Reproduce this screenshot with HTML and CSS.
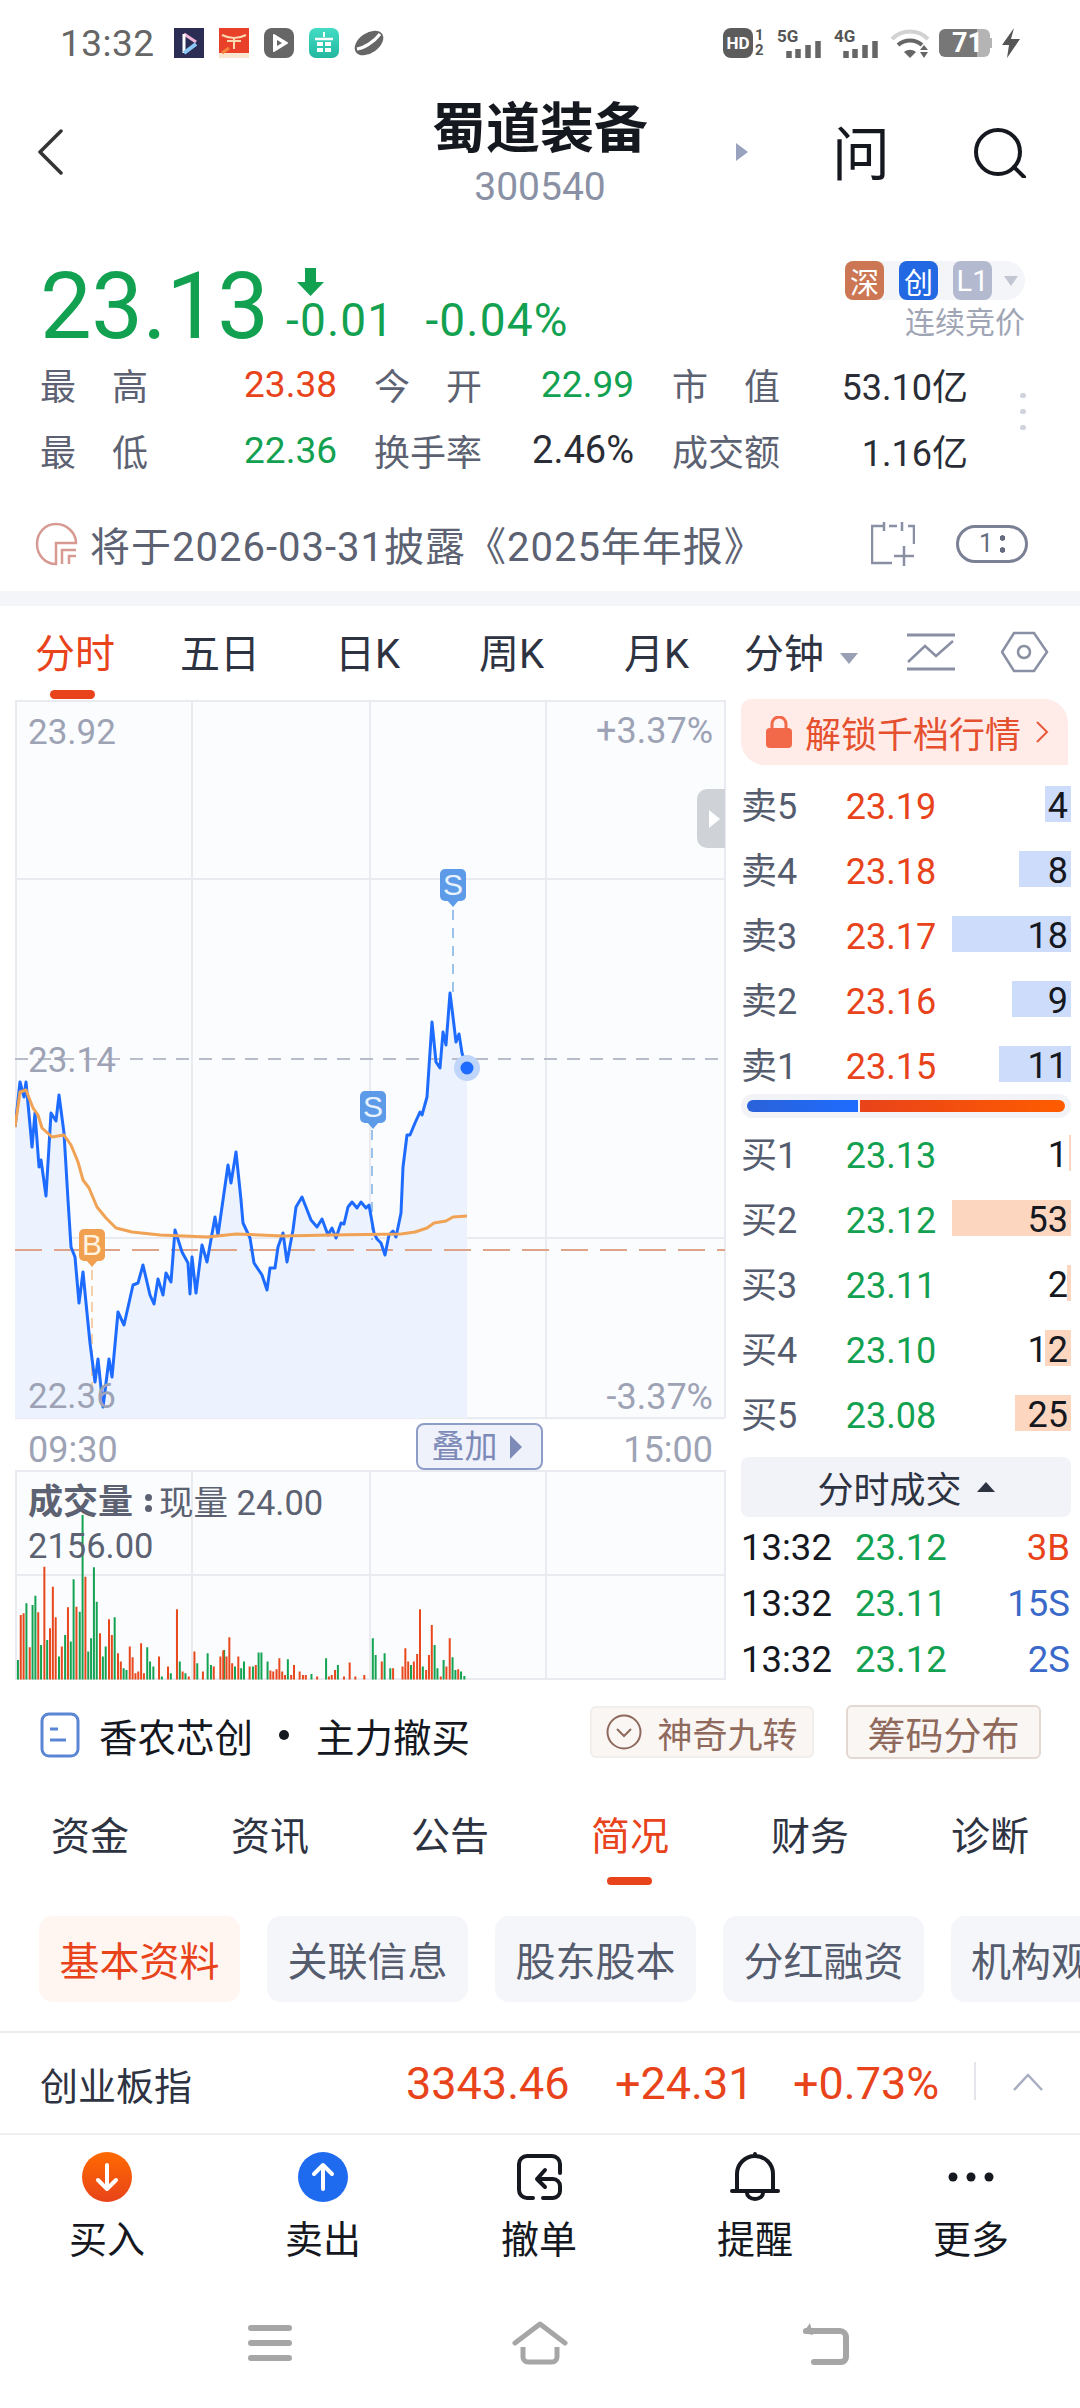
FILE: index.html
```html
<!DOCTYPE html>
<html lang="zh">
<head>
<meta charset="utf-8">
<title>蜀道装备</title>
<link rel="stylesheet" href="styles.css">
</head>
<body>
<div class="page">
  <header class="status">
    <span class="clock">13:32</span>
    <div class="apps">
      <svg width="30" height="30" viewBox="0 0 30 30"><rect width="30" height="30" fill="#2c2d55"/><path d="M10 6l12 8" stroke="#f0b6d8" stroke-width="3"/><path d="M10 6v19" stroke="#fff" stroke-width="3"/><path d="M10 25l12-9" stroke="#8cc8f5" stroke-width="4"/></svg>
      <svg width="30" height="30" viewBox="0 0 30 30"><rect width="30" height="30" fill="#e9402a"/><rect y="25" width="30" height="5" fill="#f9e6d0"/><path d="M3 7c6 3 9 3 12 3s6 0 12-3M8 13h14M15 10v11" stroke="#fbd9b0" stroke-width="2" fill="none"/><path d="M3 25l7-5" stroke="#f2843c" stroke-width="3"/></svg>
      <svg width="30" height="30" viewBox="0 0 30 30"><rect width="30" height="30" rx="8" fill="#666"/><path d="M10 7l13 8-13 8z" fill="#fff" stroke="#fff" stroke-width="2" stroke-linejoin="round"/><path d="M13 12l5 3-5 3z" fill="#666"/></svg>
      <svg width="30" height="30" viewBox="0 0 30 30"><defs><linearGradient id="tl" x1="0" y1="0" x2="0" y2="1"><stop offset="0" stop-color="#44dcc4"/><stop offset="1" stop-color="#22b8a0"/></linearGradient></defs><rect width="30" height="30" rx="7" fill="url(#tl)"/><path d="M6 11h18" stroke="#fff" stroke-width="2.500"/><path d="M8 14h14v10H8z" fill="#fff"/><path d="M15 14v10M8 19h14" stroke="#2fc8af" stroke-width="2"/><path d="M15 4v5" stroke="#fff" stroke-width="2"/></svg>
      <svg width="30" height="30" viewBox="0 0 30 30"><ellipse cx="15" cy="15" rx="16" ry="10" transform="rotate(-35 15 15)" fill="#666"/><path d="M3 21C10 20 20 14 26 6" stroke="#fff" stroke-width="3" fill="none"/></svg>
    </div>
    <div class="sys">
      <span class="hd">HD</span>
      <span class="sims"><i>1</i><i>2</i></span>
      <span class="net net1"><b>5G</b><svg width="36" height="17" viewBox="0 0 36 17"><path d="M3 17v-7M12 17v-9M22 17v-13M32 17v-17" stroke="#666" stroke-width="5.500"/></svg></span>
      <span class="net"><b>4G</b><svg width="36" height="17" viewBox="0 0 36 17"><path d="M3 17v-7M12 17v-9M22 17v-13M32 17v-17" stroke="#666" stroke-width="5.500"/></svg></span>
      <svg width="40" height="30" viewBox="0 0 40 30"><path d="M2 11c10-10 26-10 36 0" stroke="#d2d2d2" stroke-width="4" fill="none"/><path d="M8 17c7-6 17-6 24 0" stroke="#666" stroke-width="4" fill="none"/><path d="M14 24c4-3 8-3 12 0l-6 6z" fill="#666"/><path d="M34 17l4 5h-8zM30 24h8l-4 6z" fill="#666"/></svg>
      <span class="batt"><span>71</span></span>
      <svg class="bolt" width="18" height="30" viewBox="0 0 18 30"><path d="M12 0L0 17h7l-2 13L18 11H9z" fill="#555"/></svg>
    </div>
  </header>

  <div class="titlebar">
    <svg class="back" width="26" height="46" viewBox="0 0 26 46"><path d="M24 2L3 23l21 21" fill="none" stroke="#333" stroke-width="3.500" stroke-linecap="round" stroke-linejoin="round"/></svg>
    <div class="title"><h1>蜀道装备</h1><p>300540</p></div>
    <i class="next"></i>
    <span class="ask">问</span>
    <svg class="search" width="54" height="50" viewBox="0 0 54 50"><circle cx="24" cy="24" r="22" fill="none" stroke="#15181f" stroke-width="4"/><path d="M40 39l10 10" stroke="#15181f" stroke-width="4" stroke-linecap="round"/></svg>
  </div>

  <section class="quote">
    <div class="price">23.13</div>
    <div class="change">
      <svg width="27" height="28" viewBox="0 0 27 28"><path d="M8 0h11v14h8L13.500 28 0 14h8z" fill="#12a150"/></svg>
      <div class="deltas"><span>-0.01</span><span>-0.04%</span></div>
    </div>
    <div class="market">
      <div class="tags"><b class="t1">深</b><b class="t2">创</b><b class="t3">L1</b><i></i></div>
      <p>连续竞价</p>
    </div>
  </section>

  <section class="stats">
    <span class="lab sp">最 高</span><span class="val up">23.38</span><span class="lab sp">今 开</span><span class="val dn">22.99</span><span class="lab sp">市 值</span><span class="val">53.10亿</span>
    <span class="lab sp">最 低</span><span class="val dn">22.36</span><span class="lab">换手率</span><span class="val pct">2.46%</span><span class="lab">成交额</span><span class="val">1.16亿</span>
    <div class="kebab"><i></i><i></i><i></i></div>
  </section>

  <section class="notice">
    <svg width="44" height="44" viewBox="0 0 44 44"><path d="M21 42C10 42 2 33 2 22S10 2 21 2s20 9 20 19H21z" fill="none" stroke="#d69a92" stroke-width="2.500"/><path d="M27 42V28h14M34 42V34h7" fill="none" stroke="#d69a92" stroke-width="2.500"/></svg>
    <span class="ntext">将于2026-03-31披露《2025年年报》</span>
    <svg class="ncal" width="44" height="46" viewBox="0 0 44 46"><path d="M12 4H1v37h20M37 4h6v18M13 0v9M31 0v9M18 4h8M33 24v20M23 34h20" fill="none" stroke="#8a90a3" stroke-width="2.500"/></svg>
    <span class="npill">1<i></i></span>
  </section>

  <div class="band"></div>

  <nav class="ktabs">
    <span class="ktab on">分时</span><span class="ktab">五日</span><span class="ktab">日K</span><span class="ktab">周K</span><span class="ktab">月K</span>
    <span class="ktab mins">分钟<i></i></span>
    <svg class="kic1" width="48" height="38" viewBox="0 0 48 38"><path d="M0 2h48M0 36h48" stroke="#8a90a3" stroke-width="3"/><path d="M1 29l17-16 11 10 17-15" fill="none" stroke="#8a90a3" stroke-width="2.500"/></svg>
    <svg class="kic2" width="48" height="42" viewBox="0 0 48 42"><path d="M13 2h20l13 19-13 19H13L1 21z" fill="none" stroke="#8a90a3" stroke-width="2.500"/><circle cx="23" cy="21" r="6" fill="none" stroke="#8a90a3" stroke-width="2.500"/></svg>
  </nav>

  <div class="market-row">
    <div class="charts">
      <div class="chart">
        <svg class="plot" width="712" height="720" viewBox="0 0 712 720">
          <path d="M1 0V718M177 0V718M355 0V718M531 0V718M710 0V718M0 1H710M0 179H710M0 538H710M0 718H710" stroke="#e9ebf0" stroke-width="2" fill="none"/>
          <path class="area" d="M0 427L5 382 9 397 11 382 17 447 20 413 24 467 26 460 31 496 36 413 41 421 44 395 49 433 53 500 56 547 60 557 64 603 68 572 72 613 75 643 80 682 83 659 88 707 94 659 97 677 103 612 109 625 118 585 123 583 128 565 135 595 139 604 143 579 148 595 151 573 156 582 160 530 167 552 173 563 175 594 177 557 181 593 187 545 192 562 200 517 203 535 208 500 213 465 216 483 221 452 226 500 228 523 235 538 239 563 247 575 252 590 255 568 260 568 263 547 268 533 272 562 278 530 281 507 287 497 296 520 302 527 307 519 313 535 317 528 321 538 326 523 329 524 333 507 337 502 342 508 346 502 351 508 354 505 359 533 362 539 366 543 370 555 374 535 378 531 381 537 386 513 388 467 392 435 395 435 400 423 405 412 407 415 412 397 417 322 421 362 425 368 428 332 431 345 435 293 438 317 441 342 444 334 447 353 452 368V718H0Z"/>
          <path d="M357 430V540M438 292V208" stroke="#7db0e6" stroke-width="1.500" stroke-dasharray="10 8" fill="none"/>
          <path d="M77 570V690" stroke="#f3bf8e" stroke-width="1.500" stroke-dasharray="10 6" fill="none"/>
          <path d="M0 359H710" stroke="#b8bcc8" stroke-width="2" stroke-dasharray="13 10" fill="none"/>
          <path d="M0 550H710" stroke="#dfa487" stroke-width="2" stroke-dasharray="27 12" fill="none"/>
          <path class="line" d="M0 427L5 382 9 397 11 382 17 447 20 413 24 467 26 460 31 496 36 413 41 421 44 395 49 433 53 500 56 547 60 557 64 603 68 572 72 613 75 643 80 682 83 659 88 707 94 659 97 677 103 612 109 625 118 585 123 583 128 565 135 595 139 604 143 579 148 595 151 573 156 582 160 530 167 552 173 563 175 594 177 557 181 593 187 545 192 562 200 517 203 535 208 500 213 465 216 483 221 452 226 500 228 523 235 538 239 563 247 575 252 590 255 568 260 568 263 547 268 533 272 562 278 530 281 507 287 497 296 520 302 527 307 519 313 535 317 528 321 538 326 523 329 524 333 507 337 502 342 508 346 502 351 508 354 505 359 533 362 539 366 543 370 555 374 535 378 531 381 537 386 513 388 467 392 435 395 435 400 423 405 412 407 415 412 397 417 322 421 362 425 368 428 332 431 345 435 293 438 317 441 342 444 334 447 353 452 368"/>
          <path class="avg" d="M0 427L5 392 11 390 18 408 23 415 27 428 37 437 49 435 56 445 63 462 68 480 74 488 82 507 91 518 101 528 117 532 145 535 193 537 221 534 268 536 315 535 386 534 400 532 412 528 419 523 431 521 438 517 452 516"/>
          <circle cx="452" cy="368" r="13" fill="#bfd5fa"/><circle cx="452" cy="368" r="6.500" fill="#1e6cff"/>
        </svg>
        <div class="pin pin-s pin-a">S</div>
        <div class="pin pin-s pin-b">S</div>
        <div class="pin pin-b2">B</div>
        <span class="cl l1">23.92</span><span class="cl l2">23.14</span><span class="cl l3">22.36</span>
        <span class="cl r1">+3.37%</span><span class="cl r3">-3.37%</span>
        <div class="handle"><i></i></div>
      </div>
      <div class="axis"><span>09:30</span><span class="overlay-btn">叠加<i></i></span><span>15:00</span></div>
      <div class="vol">
        <svg class="plot" width="712" height="210" viewBox="0 0 712 210">
          <path d="M1 0V210M177 0V210M355 0V210M531 0V210M710 0V210M0 1H710M0 105H710M0 209H710" stroke="#e9ebf0" stroke-width="2" fill="none"/>
          <g transform="translate(-15 -270) scale(0.4719 0.3333)">
            <path vector-effect="non-scaling-stroke" stroke="#13a352" stroke-width="2" fill="none" d="M38 1439V1380M56 1439V1210M69 1439V1215M75 1439V1187M87 1439V1335M100 1439V1320M125 1439V1370M138 1439V1305M150 1439V1325M156 1439V1138M169 1439V1235M175 1439V945M187 1439V1355M193 1439V1315M199 1439V1102M205 1439V1205M218 1439V1370M224 1439V1340M243 1439V1252M262 1439V1405M268 1439V1410M312 1439V1342M318 1439V1385M325 1439V1400M343 1439V1430M362 1439V1420M381 1439V1385M393 1439V1420M418 1439V1390M440 1439V1360M447 1439V1395M475 1439V1350M498 1439V1400M511 1439V1405M517 1439V1385M536 1439V1400M548 1439V1358M554 1439V1358M567 1439V1385M610 1439V1378M660 1439V1422M691 1439V1375M716 1439V1395M790 1439V1315M796 1439V1365M815 1439V1360M827 1439V1405M871 1439V1395M896 1439V1400M921 1439V1335M927 1439V1405M940 1439V1380M959 1439V1372M965 1439V1410M977 1439V1415M984 1439V1428"/>
            <path vector-effect="non-scaling-stroke" stroke="#e8481c" stroke-width="2" fill="none" d="M44 1439V1245M50 1439V1240M63 1439V1342M81 1439V1237M94 1439V1100M106 1439V1285M112 1439V1160M118 1439V1252M131 1439V1340M144 1439V1222M162 1439V1220M181 1439V1130M212 1439V1300M231 1439V1258M237 1439V1305M250 1439V1360M256 1439V1385M275 1439V1340M281 1439V1372M287 1439V1420M293 1439V1415M299 1439V1330M305 1439V1420M337 1439V1370M356 1439V1400M375 1439V1228M387 1439V1415M400 1439V1430M412 1439V1355M430 1439V1415M453 1439V1400M467 1439V1370M473 1439V1352M480 1439V1370M486 1439V1312M492 1439V1390M505 1439V1370M529 1439V1400M542 1439V1395M573 1439V1412M579 1439V1415M586 1439V1408M592 1439V1375M598 1439V1415M604 1439V1425M617 1439V1425M623 1439V1395M635 1439V1415M642 1439V1425M648 1439V1425M672 1439V1430M697 1439V1430M703 1439V1425M710 1439V1410M729 1439V1430M741 1439V1388M753 1439V1430M772 1439V1425M809 1439V1385M833 1439V1405M853 1439V1400M859 1439V1345M865 1439V1385M877 1439V1385M884 1439V1362M890 1439V1228M903 1439V1410M909 1439V1365M915 1439V1275M934 1439V1430M946 1439V1400M953 1439V1315M971 1439V1408"/>
          </g>
        </svg>
        <div class="vol-head"><b>成交量</b><span class="vdots"><i></i><i></i></span><span>现量 24.00</span></div>
        <div class="vol-max">2156.00</div>
      </div>
    </div>

    <aside class="book">
      <div class="unlock">
        <svg width="26" height="32" viewBox="0 0 26 32"><path d="M6 14V8a7 7 0 0114 0v6" fill="none" stroke="#f2694a" stroke-width="3"/><rect y="12" width="26" height="20" rx="4" fill="#f2694a"/></svg>
        <span>解锁千档行情</span>
        <svg width="14" height="24" viewBox="0 0 14 24"><path d="M2 2l10 10L2 22" fill="none" stroke="#e8583a" stroke-width="2"/></svg>
      </div>
      <div class="rows sell">
        <div class="row"><span class="rl">卖5</span><span class="rp up">23.19</span><span class="rq"><i class="blue w26"></i><b>4</b></span></div>
        <div class="row"><span class="rl">卖4</span><span class="rp up">23.18</span><span class="rq"><i class="blue w52"></i><b>8</b></span></div>
        <div class="row"><span class="rl">卖3</span><span class="rp up">23.17</span><span class="rq"><i class="blue w119"></i><b>18</b></span></div>
        <div class="row"><span class="rl">卖2</span><span class="rp up">23.16</span><span class="rq"><i class="blue w59"></i><b>9</b></span></div>
        <div class="row"><span class="rl">卖1</span><span class="rp up">23.15</span><span class="rq"><i class="blue w72"></i><b>11</b></span></div>
      </div>
      <div class="split"><i class="sb"></i><i class="sr"></i></div>
      <div class="rows buy">
        <div class="row"><span class="rl">买1</span><span class="rp dn">23.13</span><span class="rq"><i class="org w2"></i><b>1</b></span></div>
        <div class="row"><span class="rl">买2</span><span class="rp dn">23.12</span><span class="rq"><i class="org w119"></i><b>53</b></span></div>
        <div class="row"><span class="rl">买3</span><span class="rp dn">23.11</span><span class="rq"><i class="org w4"></i><b>2</b></span></div>
        <div class="row"><span class="rl">买4</span><span class="rp dn">23.10</span><span class="rq"><i class="org w26"></i><b>12</b></span></div>
        <div class="row"><span class="rl">买5</span><span class="rp dn">23.08</span><span class="rq"><i class="org w56"></i><b>25</b></span></div>
      </div>
      <div class="fold">分时成交<i></i></div>
      <div class="trades">
        <div class="trade"><span class="tt">13:32</span><span class="tp dn">23.12</span><span class="tv up">3B</span></div>
        <div class="trade"><span class="tt">13:32</span><span class="tp dn">23.11</span><span class="tv bl">15S</span></div>
        <div class="trade"><span class="tt">13:32</span><span class="tp dn">23.12</span><span class="tv bl">2S</span></div>
      </div>
    </aside>
  </div>

  <section class="signal">
    <svg width="40" height="46" viewBox="0 0 40 46"><rect x="2" y="2" width="36" height="42" rx="7" fill="none" stroke="#5a86d5" stroke-width="3"/><path d="M10 17h8M10 28h16" stroke="#5a86d5" stroke-width="3"/></svg>
    <span class="sig-a">香农芯创</span><i class="sig-dot"></i><span class="sig-b">主力撤买</span>
    <span class="magic"><svg width="36" height="36" viewBox="0 0 36 36"><circle cx="18" cy="18" r="16.500" fill="none" stroke="#8f6a5c" stroke-width="2"/><path d="M11 15l7 7 7-7" fill="none" stroke="#8f6a5c" stroke-width="2"/></svg>神奇九转</span>
    <span class="chips-btn">筹码分布</span>
  </section>

  <nav class="dtabs">
    <span>资金</span><span>资讯</span><span>公告</span><span class="on">简况</span><span>财务</span><span>诊断</span>
  </nav>

  <div class="chipbar">
    <span class="chip on">基本资料</span><span class="chip">关联信息</span><span class="chip">股东股本</span><span class="chip">分红融资</span><span class="chip">机构观点</span>
  </div>

  <section class="index">
    <span class="iname">创业板指</span>
    <span class="inum n1">3343.46</span><span class="inum n2">+24.31</span><span class="inum n3">+0.73%</span>
    <i class="isep"></i>
    <svg width="32" height="18" viewBox="0 0 32 18"><path d="M2 17L16 2l14 15" fill="none" stroke="#a7aec2" stroke-width="2.500"/></svg>
  </section>

  <nav class="actions">
    <div class="act"><svg width="50" height="50" viewBox="0 0 50 50"><defs><linearGradient id="g1" x1="0" y1="0" x2="0" y2="1"><stop offset="0" stop-color="#ff6a00"/><stop offset="1" stop-color="#e8431a"/></linearGradient></defs><circle cx="25" cy="25" r="25" fill="url(#g1)"/><path d="M25 13v24M16 28l9 9 9-9" fill="none" stroke="#fff" stroke-width="4" stroke-linecap="round" stroke-linejoin="round"/></svg><span>买入</span></div>
    <div class="act"><svg width="50" height="50" viewBox="0 0 50 50"><circle cx="25" cy="25" r="25" fill="#1f6bf0"/><path d="M25 37V13M16 22l9-9 9 9" fill="none" stroke="#fff" stroke-width="4" stroke-linecap="round" stroke-linejoin="round"/></svg><span>卖出</span></div>
    <div class="act"><svg width="50" height="50" viewBox="-4 -3 50 50"><path d="M15 43H9a8 8 0 01-8-8V9a8 8 0 018-8h25a8 8 0 018 8v9M27 15l-8 9 8 8M19 24h16a7 7 0 017 7v5a7 7 0 01-7 7H25" fill="none" stroke="#15181f" stroke-width="4" stroke-linecap="round" stroke-linejoin="round"/></svg><span>撤单</span></div>
    <div class="act"><svg width="50" height="50" viewBox="0 0 50 50"><path d="M7 38V22a18 18 0 0136 0v16M25 2v2M2 39h46" fill="none" stroke="#15181f" stroke-width="4" stroke-linecap="round"/><path d="M17 41a8 6 0 0016 0" fill="none" stroke="#15181f" stroke-width="4"/></svg><span>提醒</span></div>
    <div class="act"><svg width="50" height="50" viewBox="0 0 50 50"><circle cx="7" cy="25" r="4.500" fill="#15181f"/><circle cx="25" cy="25" r="4.500" fill="#15181f"/><circle cx="43" cy="25" r="4.500" fill="#15181f"/></svg><span>更多</span></div>
  </nav>

  <footer class="gesture">
    <svg width="44" height="36" viewBox="0 0 44 36"><path d="M3 3h38M3 18h38M3 33h38" stroke="#a6a6a6" stroke-width="6" stroke-linecap="round"/></svg>
    <svg width="58" height="44" viewBox="0 0 58 44"><path d="M4 22L29 3l25 19" fill="none" stroke="#a6a6a6" stroke-width="5" stroke-linecap="round" stroke-linejoin="round"/><path d="M12 26v10a5 5 0 005 5h24a5 5 0 005-5V26" fill="none" stroke="#a6a6a6" stroke-width="5"/></svg>
    <svg class="gback" width="50" height="44" viewBox="0 0 50 44"><path d="M10 2L3 12l10 2" fill="#a6a6a6"/><path d="M6 10h34a6 6 0 016 6v20a5 5 0 01-5 5H14" fill="none" stroke="#a6a6a6" stroke-width="6" stroke-linecap="round"/></svg>
  </footer>
</div>
</body>
</html>
```

FILE: styles.css
```css
* { box-sizing: border-box; margin: 0; padding: 0; }
html, body { background: #fff; }
body { width: 1080px; height: 2408px; overflow: hidden; font-family: Roboto, "Noto Sans CJK SC", sans-serif; color: #15181f; }
i { display: block; font-style: normal; }
.page { width: 1080px; height: 2408px; overflow: hidden; }
.up { color: #e8431a; }
.dn { color: #12a150; }
.bl { color: #3a69c9; }

.status { height: 86px; display: flex; align-items: center; padding: 0 60px; color: #666; }
.clock { font-size: 37px; width: 114px; color: #666; letter-spacing: .5px; }
.apps { display: flex; gap: 15px; }
.sys { margin-left: auto; display: flex; align-items: center; }
.hd { width: 30px; height: 30px; background: #5c5c5c; color: #fff; border-radius: 8px; font-size: 17px; font-weight: 700; display: flex; align-items: center; justify-content: center; }
.sims { display: flex; flex-direction: column; font-size: 15px; line-height: 15px; font-weight: 700; width: 12px; margin-left: 2px; color: #555; }
.net { display: block; position: relative; width: 56px; height: 30px; }
.net1 { margin-left: 10px; margin-right: 1px; }
.net b { display: block; font-size: 17px; line-height: 16px; color: #555; }
.net svg { position: absolute; left: 9px; bottom: 0; }
.batt { margin-left: 9px; width: 51px; height: 28px; border-radius: 6px; background: linear-gradient(90deg, #777 0 38px, #b4b4b4 38px); display: flex; align-items: center; padding-left: 13px; color: #fff; font-size: 27px; font-weight: 700; position: relative; }
.batt::after { content: ""; position: absolute; right: -2px; top: 9px; width: 2px; height: 10px; background: #b4b4b4; }
.bolt { margin-left: 12px; }

.titlebar { height: 130px; display: flex; align-items: flex-start; position: relative; padding-left: 37px; }
.back { margin-top: 43px; }
.title { position: absolute; left: 0; right: 0; top: 12px; text-align: center; }
.title h1 { font-size: 54px; line-height: 64px; font-weight: 700; }
.title p { font-size: 39px; line-height: 42px; margin-top: 4px; color: #8a91a5; }
.next { position: absolute; left: 736px; top: 57px; border-left: 12px solid #99a3bd; border-top: 9px solid transparent; border-bottom: 9px solid transparent; }
.ask { position: absolute; left: 832px; top: 34px; font-size: 58px; line-height: 70px; color: #15181f; }
.search { position: absolute; left: 974px; top: 42px; }

.quote { height: 88px; position: relative; padding-left: 40px; margin-top: 47px; }
.price { font-size: 92px; line-height: 88px; color: #12a150; letter-spacing: -.5px; }
.change { position: absolute; left: 286px; top: 5px; }
.change svg { margin-left: 11px; display: block; }
.deltas { display: flex; gap: 31px; font-size: 46px; line-height: 46px; letter-spacing: 1.200px; color: #12a150; margin-top: 1px; }
.market { position: absolute; right: 55px; top: -2px; width: 180px; }
.tags { display: flex; height: 39px; background: #f4f5f9; border-radius: 20px; position: relative; }
.tags b { width: 39px; height: 39px; border-radius: 8px; color: #fff; font-size: 29px; font-weight: 400; display: flex; align-items: center; justify-content: center; margin-right: 15px; }
.tags .t1 { background: #cc7653; }
.tags .t2 { background: #2268e2; }
.tags .t3 { background: #b3bad0; }
.tags i { position: absolute; right: 7px; top: 15px; border-top: 10px solid #c2c6d2; border-left: 7px solid transparent; border-right: 7px solid transparent; }
.market p { text-align: right; font-size: 30px; line-height: 36px; margin-top: 5px; color: #a0a5b5; }

.stats { position: relative; display: grid; grid-template-columns: 108px 189px 145px 152px 146px 188px; grid-auto-rows: 66px; padding-left: 40px; align-items: center; font-size: 36px; }
.lab { color: #5c6272; display: block; width: 108px; justify-self: end; }
.lab.sp { text-align: justify; text-align-last: justify; }
.val { text-align: right; color: #2a2d36; }
.val.up { color: #e8431a; font-size: 37px; }
.val.dn { color: #12a150; font-size: 37px; }
.val.pct { font-size: 38px; }
.kebab { position: absolute; left: 1020px; top: 42px; display: flex; flex-direction: column; gap: 11px; }
.kebab i { width: 6px; height: 5px; border-radius: 3px; background: #d0d3dc; }

.notice { display: flex; align-items: center; height: 60px; margin-top: 31px; padding-left: 35px; position: relative; }
.ntext { font-size: 40px; letter-spacing: 1px; margin-left: 11px; color: #5c6272; white-space: nowrap; }
.ncal { position: absolute; left: 871px; top: 8px; }
.npill { position: absolute; left: 956px; top: 11px; width: 72px; height: 38px; border: 3px solid #7b8194; border-radius: 19px; font-size: 25px; line-height: 32px; padding-left: 20px; color: #666c80; display: flex; align-items: center; gap: 7px; }
.npill i { width: 5px; height: 18px; background: radial-gradient(circle at 50% 3px, #666c80 2.500px, transparent 3px), radial-gradient(circle at 50% 15px, #666c80 2.500px, transparent 3px); }

.band { height: 15px; background: #f4f5f8; margin-top: 17px; }

.ktabs { height: 94px; position: relative; display: flex; align-items: center; }
.ktab { position: absolute; top: 25px; font-size: 40px; line-height: 48px; color: #2e3342; }
.ktab:nth-child(1) { left: 35px; color: #e8431a; }
.ktab:nth-child(1)::after { content: ""; position: absolute; left: 15px; top: 59px; width: 45px; height: 9px; border-radius: 5px; background: #e8431a; }
.ktab:nth-child(2) { left: 180px; }
.ktab:nth-child(3) { left: 335px; }
.ktab:nth-child(4) { left: 479px; }
.ktab:nth-child(5) { left: 624px; }
.ktab:nth-child(6) { left: 744px; display: flex; align-items: center; }
.mins i { margin-left: 16px; margin-top: 6px; border-top: 11px solid #99a0b3; border-left: 9px solid transparent; border-right: 9px solid transparent; }
.kic1 { position: absolute; left: 907px; top: 27px; }
.kic2 { position: absolute; left: 1001px; top: 25px; }

.market-row { display: flex; padding-left: 15px; height: 980px; align-items: flex-start; }
.charts { width: 712px; flex: none; }
.chart { position: relative; height: 720px; background: linear-gradient(90deg, #fbfcfe 710px, #fff 710px); }
.plot { display: block; position: absolute; left: 0; top: 0; }
.area { fill: #ecf3fe; }
.line { fill: none; stroke: #1e6cff; stroke-width: 3; stroke-linejoin: round; }
.avg { fill: none; stroke: #f0a255; stroke-width: 3; stroke-linejoin: round; }
.pin { position: absolute; width: 26px; height: 32px; border-radius: 5px; color: #e8f2ff; font-size: 30px; line-height: 32px; text-align: center; font-family: "Liberation Sans", sans-serif; }
.pin::after { content: ""; position: absolute; left: 7px; top: 31px; border-top: 7px solid; border-left: 6px solid transparent; border-right: 6px solid transparent; }
.pin-s { background: #5d9be8; }
.pin-s::after { border-top-color: #5d9be8; }
.pin-a { left: 425px; top: 169px; }
.pin-b { left: 345px; top: 391px; }
.pin-b2 { left: 64px; top: 529px; background: #f0a04f; color: #fff3e0; }
.pin-b2::after { border-top-color: #f0a04f; }
.cl { position: absolute; font-size: 35px; line-height: 38px; color: #9da3b5; }
.l1 { left: 13px; top: 14px; }
.l2 { left: 13px; top: 342px; }
.l3 { left: 13px; top: 678px; }
.r1 { right: 14px; top: 12px; font-size: 36px; }
.r3 { right: 14px; top: 678px; font-size: 36px; }
.handle { position: absolute; left: 682px; top: 89px; width: 28px; height: 59px; background: #cfd2d7; border-radius: 10px 0 0 10px; display: flex; align-items: center; justify-content: center; }
.handle i { border-left: 11px solid #fff; border-top: 9px solid transparent; border-bottom: 9px solid transparent; margin-left: 6px; }
.axis { height: 50px; display: flex; position: relative; justify-content: space-between; padding: 11px 14px 0 13px; font-size: 36px; line-height: 38px; color: #9da3b5; }
.overlay-btn { position: absolute; left: 401px; top: 3px; width: 127px; height: 47px; border: 2px solid #8e9cc8; border-radius: 8px; background: #f0f2fb; color: #7d8ab8; font-size: 33px; line-height: 42px; padding-right: 6px; display: flex; align-items: center; justify-content: center; gap: 12px; }
.overlay-btn i { border-left: 12px solid #7d8ab8; border-top: 12px solid transparent; border-bottom: 12px solid transparent; }
.vol { position: relative; height: 210px; background: linear-gradient(90deg, #fbfcfe 710px, #fff 710px); }
.vol-head { position: absolute; left: 13px; top: 13px; display: flex; align-items: center; font-size: 34.500px; line-height: 40px; color: #5c6272; white-space: nowrap; }
.vol-head b { font-weight: 700; font-size: 35px; }
.vdots { display: flex; flex-direction: column; gap: 4px; margin: 0 7px 0 12px; }
.vdots i { width: 7px; height: 7px; border-radius: 50%; background: #5c6272; }
.vol-max { position: absolute; left: 13px; top: 56px; font-size: 34.500px; line-height: 40px; color: #5c6272; }

.book { width: 330px; margin-left: 14px; flex: none; height: 980px; }
.unlock { height: 66px; margin-top: -1px; width: 327px; background: #ffece8; border-radius: 10px 24px 0 24px; display: flex; align-items: center; padding-left: 25px; color: #e5502f; font-size: 36px; }
.unlock span { margin-left: 13px; margin-right: 14px; }
.rows { display: flex; flex-direction: column; }
.sell { margin-top: 21px; }
.buy { margin-top: 17px; }
.row { height: 36px; display: flex; align-items: center; position: relative; margin-bottom: 29px; }
.row:last-child { margin-bottom: 0; }
.rl { width: 104px; font-size: 36px; line-height: 36px; padding-top: 6px; color: #555c6e; }
.rp { font-size: 36px; line-height: 36px; padding-top: 6px; width: 92px; text-align: center; white-space: nowrap; }
.rq { position: absolute; right: 0; top: 0; height: 36px; display: flex; justify-content: flex-end; width: 119px; }
.rq b { position: relative; top: 2px; font-weight: 400; font-size: 36px; line-height: 36px; padding-right: 3px; color: #15181f; }
.rq i { position: absolute; right: 0; top: 0; height: 36px; }
.blue { background: #cddcfb; }
.org { background: #fdd6c0; }
.w2 { width: 2px; } .w4 { width: 4px; } .w26 { width: 26px; } .w52 { width: 52px; } .w56 { width: 56px; } .w59 { width: 59px; } .w72 { width: 72px; } .w119 { width: 119px; }
.split { height: 24px; background: #f1f3f7; border-radius: 12px; padding: 6px; display: flex; margin-top: 12px; }
.sb { width: 111px; height: 12px; background: linear-gradient(90deg, #2a62d8, #1e6cff); border-radius: 6px 0 0 6px; }
.sr { flex: 1; margin-left: 2px; height: 12px; background: linear-gradient(90deg, #e8431a, #ff5c00); border-radius: 0 6px 6px 0; }
.fold { height: 60px; margin-top: 26px; background: #f2f3f8; border-radius: 8px; display: flex; align-items: center; justify-content: center; gap: 15px; font-size: 36px; color: #2e3342; }
.fold i { border-bottom: 10px solid #2e3342; border-left: 9px solid transparent; border-right: 9px solid transparent; }
.trades { margin-top: 2px; }
.trade { height: 56px; display: flex; align-items: center; font-size: 36.500px; }
.tt { width: 114px; }
.tp { width: 100px; }
.tv { margin-left: auto; padding-right: 1px; }

.signal { position: relative; height: 88px; display: flex; align-items: center; padding-left: 40px; margin-top: 11px; margin-bottom: 24px; font-size: 38.500px; }
.sig-a { margin-left: 19px; }
.sig-dot { width: 10px; height: 10px; border-radius: 50%; background: #15181f; margin: 0 27px 0 26px; }
.magic { position: absolute; left: 590px; top: 15px; width: 224px; height: 52px; border: 2px solid #f1eeec; background: #f9f6f4; border-radius: 6px; color: #8f6a5c; font-size: 35px; display: flex; align-items: center; justify-content: center; gap: 15px; }
.chips-btn { position: absolute; left: 846px; top: 14px; width: 195px; height: 54px; border: 2px solid #e4d8d2; background: #f9f6f4; border-radius: 6px; color: #8f6a5c; font-size: 38px; display: flex; align-items: center; justify-content: center; }

.dtabs { position: relative; display: flex; padding-left: 51px; gap: 102px; font-size: 39px; line-height: 48px; height: 113px; padding-top: 10px; color: #2e3342; }
.dtabs span { width: 78px; white-space: nowrap; }
.dtabs .on { color: #e8431a; position: relative; }
.dtabs .on::after { content: ""; position: absolute; left: 16px; top: 64px; width: 45px; height: 8px; border-radius: 4px; background: #e8431a; }

.chipbar { display: flex; gap: 27px; padding-left: 39px; height: 86px; overflow: hidden; }
.chip { flex: none; width: 201px; height: 86px; background: #f5f6fa; border-radius: 14px; font-size: 40px; display: flex; align-items: center; justify-content: center; color: #555c6e; white-space: nowrap; overflow: hidden; }
.chip.on { background: #fff5f1; color: #e8431a; }
.chip:last-child { justify-content: flex-start; padding-left: 20px; }

.index { margin-top: 29px; height: 104px; border-top: 2px solid #ececef; border-bottom: 2px solid #eef0f2; display: flex; align-items: center; padding-left: 40px; position: relative; }
.iname { font-size: 38px; color: #2e3342; }
.inum { position: absolute; font-size: 45px; line-height: 50px; color: #e8431a; top: 26px; }
.n1 { left: 406px; } .n2 { left: 615px; } .n3 { left: 793px; }
.isep { position: absolute; left: 974px; top: 29px; width: 2px; height: 38px; background: #e3e5ea; }
.index svg { position: absolute; left: 1012px; top: 40px; }

.actions { display: flex; height: 150px; padding-top: 17px; }
.act { width: 216px; display: flex; flex-direction: column; align-items: center; font-size: 38px; line-height: 44px; }
.act:first-child { margin-left: -1px; }
.act span { margin-top: 16px; }
.gesture { display: flex; align-items: center; padding: 36px 0 0 248px; gap: 219px; }
.gback { margin-left: 12px; }
```
